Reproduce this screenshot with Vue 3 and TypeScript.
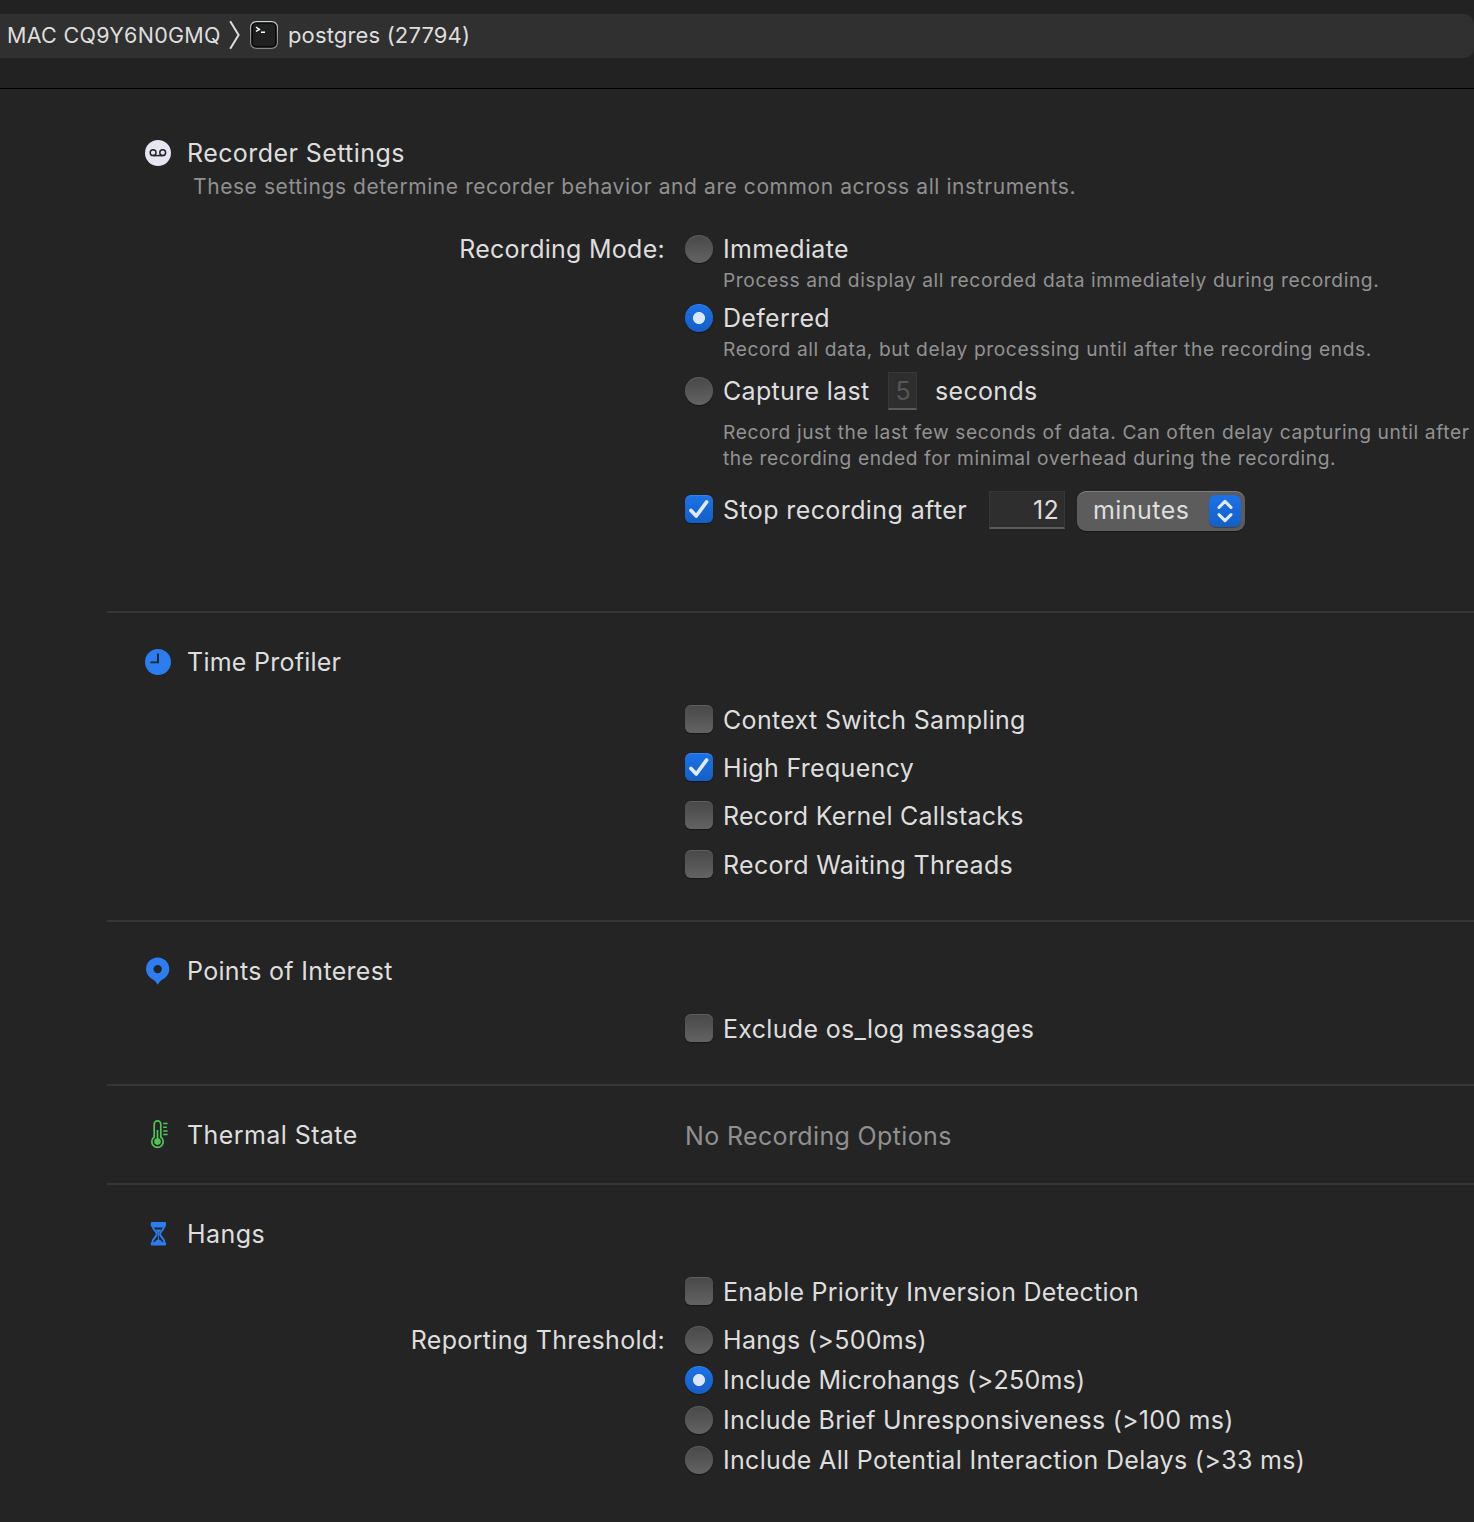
<script setup lang="ts">
interface Option {
  label: string
  kind: 'radio' | 'check'
  on?: boolean
  caption?: string
  tight?: boolean
}

const modes: Option[] = [
  { label: 'Immediate', kind: 'radio', caption: 'Process and display all recorded data immediately during recording.' },
  { label: 'Deferred', kind: 'radio', on: true, caption: 'Record all data, but delay processing until after the recording ends.' },
]

const profiler: Option[] = [
  { label: 'Context Switch Sampling', kind: 'check' },
  { label: 'High Frequency', kind: 'check', on: true },
  { label: 'Record Kernel Callstacks', kind: 'check', tight: true },
  { label: 'Record Waiting Threads', kind: 'check' },
]

const thresholds: Option[] = [
  { label: 'Hangs (>500ms)', kind: 'radio' },
  { label: 'Include Microhangs (>250ms)', kind: 'radio', on: true, tight: true },
  { label: 'Include Brief Unresponsiveness (>100 ms)', kind: 'radio', tight: true },
  { label: 'Include All Potential Interaction Delays (>33 ms)', kind: 'radio' },
]
</script>

<template>
  <div class="window">
    <header class="toolbar">
      <div class="path">
        <span class="path-text host">MAC CQ9Y6N0GMQ</span>
        <svg class="chevron" width="12" height="30" viewBox="0 0 12 30"><path d="M1.2 1.2 L9.6 15 L1.2 28.8" fill="none" stroke="#dedede" stroke-width="2" /></svg>
        <svg class="terminal" width="28" height="28" viewBox="0 0 28 28">
          <defs>
            <linearGradient id="rim" x1="0" y1="0" x2="0" y2="1">
              <stop offset="0" stop-color="#c3d0d4" />
              <stop offset="0.5" stop-color="#8f9496" />
              <stop offset="1" stop-color="#858585" />
            </linearGradient>
          </defs>
          <rect x="0.6" y="0.6" width="26.8" height="26.8" rx="5.6" fill="#050505" stroke="url(#rim)" stroke-width="1.2" />
          <rect x="2.8" y="2.8" width="22.4" height="22.4" rx="3.6" fill="#202020" />
          <path d="M6 6.2 L9.4 8.4 L6 10.4 M11 11.2 H15" fill="none" stroke="#fff" stroke-width="1.4" />
        </svg>
        <span class="path-text process">postgres (27794)</span>
      </div>
    </header>

    <section class="section recorder">
      <div class="heading">
        <svg class="icon" width="28" height="28" viewBox="0 0 28 28">
          <circle cx="14" cy="14" r="13" fill="#e6e5f2" />
          <g fill="none" stroke="#242424" stroke-width="1.5">
            <circle cx="9.1" cy="13.7" r="2.9" /><circle cx="18.7" cy="13.7" r="2.9" /><path d="M9 16.6 H18.8" />
          </g>
        </svg>
        <h2 class="wide">Recorder Settings</h2>
      </div>
      <p class="intro">These settings determine recorder behavior and are common across all instruments.</p>
      <div class="form">
        <div class="form-label mode-label">Recording Mode:</div>
        <div class="controls">
          <div v-for="mode in modes" :key="mode.label" class="mode">
            <div class="option">
              <span class="radio" :class="{ on: mode.on }"></span><span>{{ mode.label }}</span>
            </div>
            <p class="caption">{{ mode.caption }}</p>
          </div>
          <div class="option capture">
            <span class="radio"></span><span>Capture last</span><span class="field small">5</span><span>seconds</span>
          </div>
          <p class="caption long">Record just the last few seconds of data. Can often delay capturing until after<br />the recording ended for minimal overhead during the recording.</p>
          <div class="option stop">
            <span class="check on"><svg width="28" height="28" viewBox="0 0 28 28"><path d="M6 15.4 L11.3 21 L21.6 7" /></svg></span>
            <span class="stop-text">Stop recording after</span>
            <span class="field amount">12</span>
            <span class="select">
              <span class="unit">minutes</span>
              <span class="stepper"><svg width="32" height="32" viewBox="0 0 32 32"><path d="M10 12.4 L16 6.4 L22 12.4 M10 19.6 L16 25.6 L22 19.6" /></svg></span>
            </span>
          </div>
        </div>
      </div>
    </section>

    <section class="section profiler">
      <div class="heading">
        <svg class="icon" width="28" height="28" viewBox="0 0 28 28">
          <circle cx="14" cy="14" r="13" fill="#2b7df0" />
          <path d="M14 5.4 V14.4 H6.4" fill="none" stroke="#242424" stroke-width="1.9" />
        </svg>
        <h2 class="tight">Time Profiler</h2>
      </div>
      <div class="options checks">
        <div v-for="item in profiler" :key="item.label" class="option">
          <span class="check" :class="{ on: item.on }"><svg v-if="item.on" width="28" height="28" viewBox="0 0 28 28"><path d="M6 15.4 L11.3 21 L21.6 7" /></svg></span><span :class="{ tight: item.tight }">{{ item.label }}</span>
        </div>
      </div>
    </section>

    <section class="section points">
      <div class="heading">
        <svg class="icon" width="28" height="28" viewBox="0 0 28 28">
          <path fill-rule="evenodd" d="M13.7 0.6 C20.2 0.6 25.3 5.6 25.3 12 C25.3 16.6 22.6 20.2 18.8 22.2 C16.4 23.6 15 25.4 13.7 27.8 C12.4 25.4 11 23.6 8.6 22.2 C4.8 20.2 2.1 16.6 2.1 12 C2.1 5.6 7.2 0.6 13.7 0.6 Z M13.7 7.9 A4.2 4.2 0 1 0 13.7 16.3 A4.2 4.2 0 1 0 13.7 7.9 Z" fill="#2b7df0" />
        </svg>
        <h2>Points of Interest</h2>
      </div>
      <div class="options checks">
        <div class="option"><span class="check"></span><span>Exclude os_log messages</span></div>
      </div>
    </section>

    <section class="section thermal">
      <div class="heading">
        <svg class="icon" width="28" height="30" viewBox="0 0 28 30">
          <g fill="none" stroke="#4fc553" stroke-width="1.7">
            <path d="M10.2 17 V4.2 A3.3 3.3 0 0 1 16.8 4.2 V17 A5.7 5.7 0 1 1 10.2 17 Z" />
            <path d="M13.5 10 V20" />
            <path d="M19.2 3.6 H23.6 M19.2 7.2 H22.8 M19.2 10.9 H23.6 M19.2 14.5 H23.6" stroke-width="1.5" />
          </g>
          <circle cx="13.5" cy="21.6" r="3.3" fill="#4fc553" />
        </svg>
        <h2 class="wide">Thermal State</h2>
        <span class="none">No Recording Options</span>
      </div>
    </section>

    <section class="section hangs">
      <div class="heading">
        <svg class="icon" width="28" height="28" viewBox="0 0 28 28">
          <path d="M8 2 H21 Q22 2 22 3 V5 Q22 7 20.6 7.4 H8.2 Q6.8 7 6.8 5 V3 Q6.8 2 8 2 Z" fill="#2b7df0" />
          <path d="M8.7 6 C8.7 10.4 12.8 11 12.8 14 C12.8 17 8.2 18 8.2 23.4 H20.6 C20.6 18 16 17 16 14 C16 11 20.1 10.4 20.1 6" fill="none" stroke="#2b7df0" stroke-width="1.9" />
          <path d="M11.6 9.4 H17.2 C16.6 10.8 15.2 11.6 14.9 13.6 V19.6 C16.6 20.2 18 21.4 18.4 22.8 H10.4 C10.8 21.4 12.2 20.2 13.9 19.6 V13.6 C13.6 11.6 12.2 10.8 11.6 9.4 Z" fill="#2b7df0" />
          <rect x="6.8" y="22.2" width="15.2" height="3.4" rx="1" fill="#2b7df0" />
        </svg>
        <h2 class="wide">Hangs</h2>
      </div>
      <div class="options">
        <div class="option"><span class="check"></span><span class="tight">Enable Priority Inversion Detection</span></div>
      </div>
      <div class="form">
        <div class="form-label">Reporting Threshold:</div>
        <div class="controls">
          <div v-for="item in thresholds" :key="item.label" class="option threshold">
            <span class="radio" :class="{ on: item.on }"></span><span :class="{ tight: item.tight }">{{ item.label }}</span>
          </div>
        </div>
      </div>
    </section>
  </div>
</template>

<style>
body { margin: 0; background: #242424; }
</style>

<style scoped>
.window {
  box-sizing: border-box;
  width: 1474px;
  height: 1522px;
  overflow: hidden;
  background: #242424;
  color: #dedede;
  font-family: Inter, "Liberation Sans", sans-serif;
  font-size: 25px;
  letter-spacing: 0.32px;
  line-height: 40px;
  white-space: nowrap;
}
h2, p { margin: 0; font: inherit; }
svg { display: block; flex: none; }
.tight { letter-spacing: 0.25px; }
.wide { letter-spacing: 0.42px; }
.toolbar { box-sizing: border-box; height: 89px; padding-top: 14px; background: #222; border-bottom: 1px solid #000; }
.path { display: flex; align-items: center; height: 44px; background: #303030; border-radius: 0 10px 10px 0; font-size: 22px; }
.path-text { margin-top: -2px; }
.host { width: 222px; padding-left: 7px; font-size: 21.5px; letter-spacing: 0.3px; }
.chevron { margin-top: -2px; }
.terminal { margin: -2px 0 0 9px; }
.process { margin-left: 10px; letter-spacing: 0.15px; }

.section { box-sizing: border-box; margin-left: 107px; padding-top: 29px; border-top: 2px solid #363636; }
.recorder { height: 522px; margin-top: 0; padding-top: 44px; border-top: 0; }
.profiler { height: 309px; }
.points { height: 164px; }
.thermal { height: 99px; }
.heading { display: flex; align-items: center; height: 40px; padding-left: 37px; }
.heading h2 { width: 498px; margin-left: 15px; }
.none { color: #909090; padding-top: 2px; letter-spacing: 0.36px; }
.intro { margin: 4px 0 0 86px; height: 20px; line-height: 20px; font-size: 21px; color: #909090; letter-spacing: 0.58px; }
.form { display: grid; grid-template-columns: 558px 1fr; column-gap: 20px; }
.recorder .form { margin-top: 32px; }
.form-label { text-align: right; }
.mode-label { letter-spacing: 0.27px; }
.option { display: flex; align-items: center; height: 40px; }
.mode { height: 69px; }
.caption { margin: -2px 0 0 38px; font-size: 19.2px; line-height: 26px; color: #929292; letter-spacing: 0.595px; }
.capture { margin-top: 4px; }
.long { margin-top: 8px; }
.stop { margin-top: 19px; }
.options { margin: 18px 0 0 578px; }
.checks .option { height: 48px; }
.checks .option:nth-child(4) { margin-top: 1px; }
.checks { margin-top: 14px; }
.hangs .options { margin-bottom: 8px; }
.radio, .check {
  flex: none;
  width: 28px;
  height: 28px;
  margin-right: 10px;
  background: linear-gradient(#484848, #636363);
  box-shadow: 0 1px 1px rgba(0, 0, 0, 0.4), inset 0 1px 0.5px rgba(255, 255, 255, 0.12);
}
.radio { border-radius: 50%; }
.check { border-radius: 6px; position: relative; top: -1px; }
.on { background: linear-gradient(#1b73e8, #155fc4); }
.radio.on { background: radial-gradient(circle, #dbe7f8 5.6px, transparent 6.4px), linear-gradient(#1b73e8, #155fc4); }
.check path, .stepper path { fill: none; stroke: #e0eafa; stroke-width: 3.7; stroke-linecap: round; stroke-linejoin: round; }
.stepper path { stroke-width: 3; }
.field {
  box-sizing: border-box;
  height: 38px;
  line-height: 36px;
  background: #2e2e2e;
  border: 1px solid #373737;
  border-bottom: 2px solid #5a5a5a;
  text-align: right;
}
.small { width: 29px; margin: 0 17.5px 0 19px; padding-right: 5.5px; color: #575757; }
.amount { width: 76px; padding-right: 5px; }
.stop-text { width: 266px; letter-spacing: 0.4px; }
.select {
  box-sizing: border-box;
  display: flex;
  align-items: center;
  justify-content: space-between;
  width: 168px;
  height: 40px;
  margin: 1px 0 0 12px;
  padding: 0 4px 0 16px;
  border-radius: 9px;
  background: #5c5c5c;
  box-shadow: 0 1px 1px rgba(0, 0, 0, 0.4), inset 0 1px 0.5px rgba(255, 255, 255, 0.2);
}
.unit { margin-top: -2px; letter-spacing: 0.45px; }
.stepper { border-radius: 7px; background: linear-gradient(#1b73e8, #155fc4); box-shadow: 0 1px 1px rgba(0, 0, 0, 0.3); }
</style>
